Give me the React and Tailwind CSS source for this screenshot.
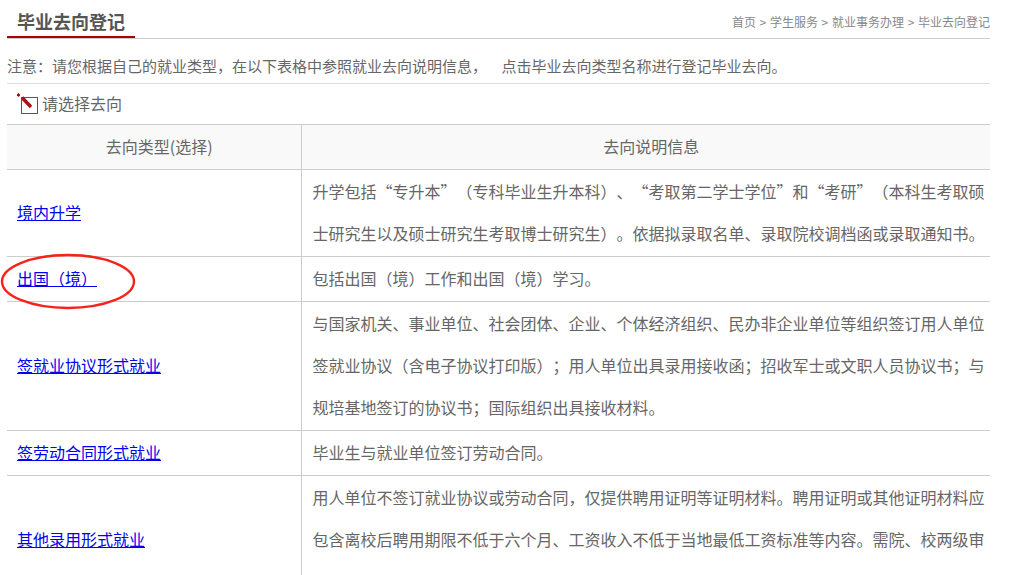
const ROWS = [
    {
        name: '境内升学',
        info: ['升学包括“专升本”（专科毕业生升本科）、“考取第二学士学位”和“考研”（本科生考取硕', '士研究生以及硕士研究生考取博士研究生）。依据拟录取名单、录取院校调档函或录取通知书。'],
    },
    { name: '出国（境）', info: ['包括出国（境）工作和出国（境）学习。'] },
    {
        name: '签就业协议形式就业',
        info: [
            '与国家机关、事业单位、社会团体、企业、个体经济组织、民办非企业单位等组织签订用人单位',
            '签就业协议（含电子协议打印版）；用人单位出具录用接收函；招收军士或文职人员协议书；与',
            '规培基地签订的协议书；国际组织出具接收材料。',
        ],
    },
    { name: '签劳动合同形式就业', info: ['毕业生与就业单位签订劳动合同。'] },
    {
        name: '其他录用形式就业',
        info: ['用人单位不签订就业协议或劳动合同，仅提供聘用证明等证明材料。聘用证明或其他证明材料应', '包含离校后聘用期限不低于六个月、工资收入不低于当地最低工资标准等内容。需院、校两级审'],
        tall: true,
    },
];

const App = () => {
    return (
        <div className="relative h-[575px] overflow-hidden bg-white px-[7px] pr-[33px] font-['Noto_Sans_CJK_SC','Liberation_Sans',sans-serif] text-[#666] [text-spacing-trim:space-all]">
            {/* Title bar */}
            <div className="flex h-[39px] items-start justify-between border-b border-[#ccc]">
                <h2 className="flex h-[38px] w-[128px] items-center border-b-2 border-[#a80000] pl-[10px] pt-[7px] text-[18px] font-bold text-[#555]">
                    毕业去向登记
                </h2>
                <div className="pt-[14px] text-[12px] leading-[16px] whitespace-nowrap text-[#888] [word-spacing:1px]">
                    首页 &gt; 学生服务 &gt; 就业事务办理 &gt; 毕业去向登记
                </div>
            </div>

            {/* Note */}
            <div className="flex h-[45px] items-center border-b border-[#ddd] pt-[10px] text-[15px] whitespace-pre [word-spacing:0.25px]">
                注意：请您根据自己的就业类型，在以下表格中参照就业去向说明信息，    点击毕业去向类型名称进行登记毕业去向。
            </div>

            {/* Prompt */}
            <div className="flex h-[40px] items-center gap-[4px] pb-[2px] pl-[10px] text-[16px]">
                <svg width="21" height="22" viewBox="0 0 21 22" className="shrink-0">
                    <rect x="4.5" y="5.5" width="16" height="16" fill="none" stroke="#c62828" strokeWidth="1" />
                    <path d="M0.5 2L2.5 4" stroke="#a80000" strokeWidth="2.5" />
                    <path d="M5 5.5L14 15" stroke="#b01015" strokeWidth="3.5" />
                </svg>
                <span>请选择去向</span>
            </div>

            {/* Table */}
            <table className="w-[983px] table-fixed border-collapse text-[16px]">
                <colgroup>
                    <col className="w-[294px]" />
                    <col />
                </colgroup>
                <thead>
                    <tr className="h-[45px] bg-[#f9f9f9]">
                        <th className="border-y border-r border-[#ccc] pb-[2px] pl-[11px] font-normal">去向类型(选择)</th>
                        <th className="border-y border-[#ccc] pb-[2px] pl-[11px] font-normal">去向说明信息</th>
                    </tr>
                </thead>
                <tbody>
                    {ROWS.map(row => (
                        <tr key={row.name} className={row.tall ? 'h-[130px]' : ''}>
                            <td className={`border-y border-r border-[#ccc] pl-[10px] ${row.tall ? 'pb-[4px]' : 'pb-[2px]'}`}>
                                <a href="#" className="text-[#0000ee] underline whitespace-pre">{row.name}</a>
                            </td>
                            <td className={`border-y border-[#ccc] pb-[2px] pl-[11px] leading-[42px] whitespace-nowrap ${row.tall ? 'align-top' : ''}`}>
                                {row.info.map(line => (
                                    <div key={line}>{line}</div>
                                ))}
                            </td>
                        </tr>
                    ))}
                </tbody>
            </table>

            {/* Hand-drawn circle over the second row */}
            <svg width="140" height="60" viewBox="0 0 140 60" className="absolute left-0 top-[252px]">
                <ellipse cx="68" cy="29.5" rx="66" ry="26.5" fill="none" stroke="#f5231a" strokeWidth="2.4" />
            </svg>
        </div>
    );
};

export default App;
